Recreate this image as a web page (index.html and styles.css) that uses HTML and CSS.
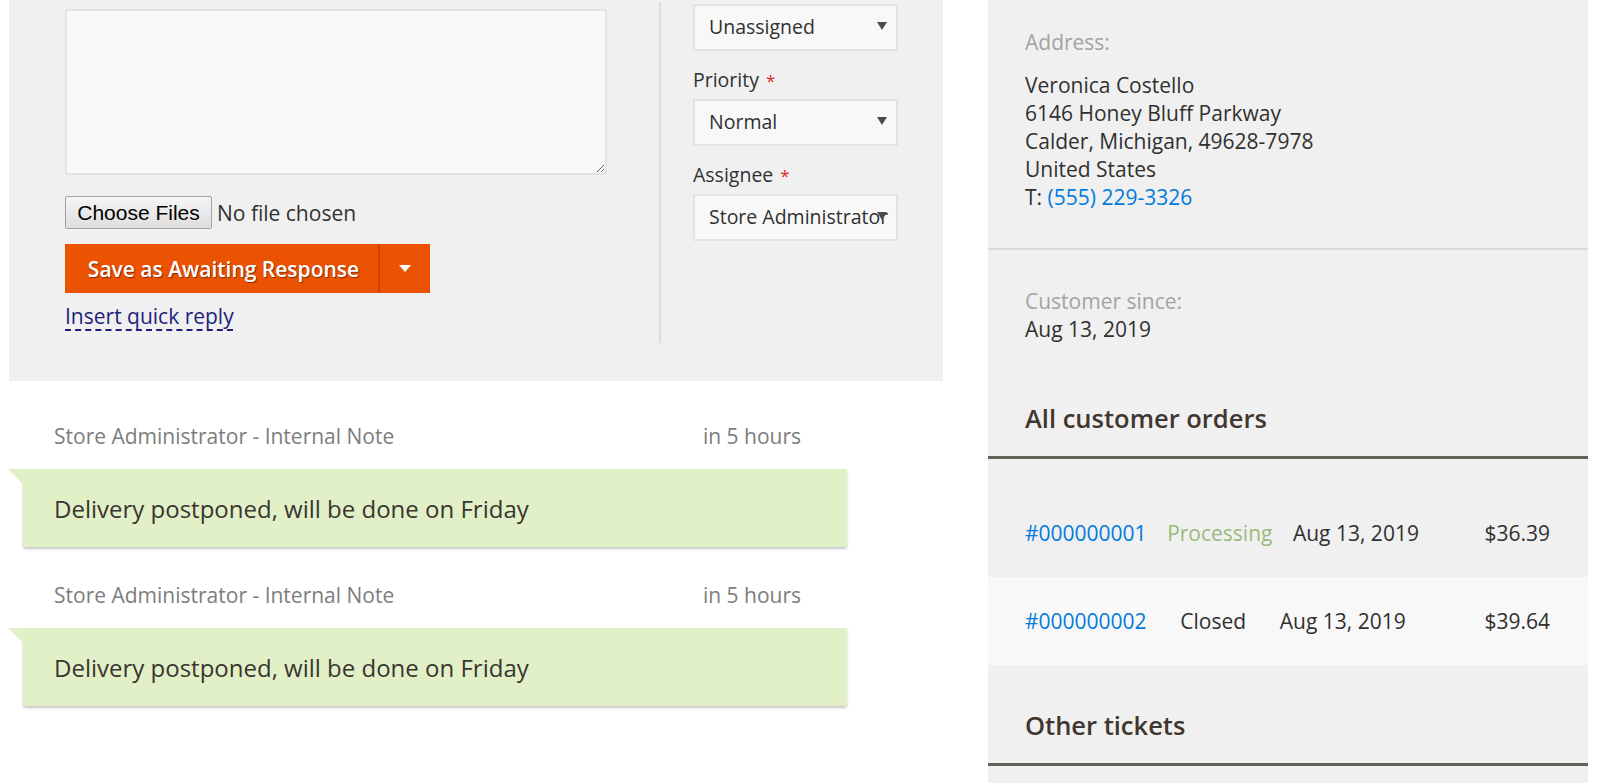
FILE: index.html
```html
<!DOCTYPE html>
<html lang="en">
<head>
<meta charset="utf-8">
<title>Ticket</title>
<link rel="stylesheet" href="styles.css">
</head>
<body>
<div class="page">
  <main class="main">
    <section class="form-panel">
      <div class="form-row">
        <div class="compose">
          <textarea class="reply-text"></textarea>
          <div class="file-row">
            <button class="file-btn" type="button">Choose Files</button>
            <span class="file-label">No file chosen</span>
          </div>
          <div class="split-btn">
            <button class="split-main" type="button">Save as Awaiting Response</button>
            <button class="split-toggle" type="button" aria-label="More">
              <svg width="12" height="8" viewBox="0 0 12 8"><path d="M0 0H12L6 7Z" fill="#fff"/></svg>
            </button>
          </div>
          <a class="quick-reply" href="#">Insert quick reply</a>
        </div>
        <div class="divider"></div>
        <div class="props">
          <div class="select"><span class="select-text">Unassigned</span><svg class="select-arrow" width="10" height="8" viewBox="0 0 10 8"><path d="M0 0H10L5 8Z" fill="#514943"/></svg></div>
          <label class="prop-label">Priority <span class="req">*</span></label>
          <div class="select"><span class="select-text">Normal</span><svg class="select-arrow" width="10" height="8" viewBox="0 0 10 8"><path d="M0 0H10L5 8Z" fill="#514943"/></svg></div>
          <label class="prop-label">Assignee <span class="req">*</span></label>
          <div class="select"><span class="select-text">Store Administrator</span><svg class="select-arrow" width="10" height="8" viewBox="0 0 10 8"><path d="M0 0H10L5 8Z" fill="#514943"/></svg></div>
        </div>
      </div>
    </section>

    <section class="notes">
      <article class="note">
        <div class="note-head"><span>Store Administrator - Internal Note</span><span>in 5 hours</span></div>
        <div class="note-body">Delivery postponed, will be done on Friday</div>
      </article>
      <article class="note">
        <div class="note-head"><span>Store Administrator - Internal Note</span><span>in 5 hours</span></div>
        <div class="note-body">Delivery postponed, will be done on Friday</div>
      </article>
    </section>
  </main>

  <aside class="aside">
    <div class="info-block address-block">
      <div class="info-label">Address:</div>
      <div class="address">
        Veronica Costello<br>
        6146 Honey Bluff Parkway<br>
        Calder, Michigan, 49628-7978<br>
        United States<br>
        T: <a class="link" href="#">(555) 229-3326</a>
      </div>
    </div>
    <div class="info-block since-block">
      <div class="info-label since-label">Customer since:</div>
      <div>Aug 13, 2019</div>
    </div>

    <h2 class="aside-title orders-title">All customer orders</h2>
    <div class="orders">
      <div class="order-row">
        <a class="link" href="#">#000000001</a>
        <span class="status-processing">Processing</span>
        <span>Aug 13, 2019</span>
        <span class="price">$36.39</span>
      </div>
      <div class="order-row alt">
        <a class="link" href="#">#000000002</a>
        <span>Closed</span>
        <span>Aug 13, 2019</span>
        <span class="price">$39.64</span>
      </div>
    </div>

    <h2 class="aside-title tickets-title">Other tickets</h2>
  </aside>
</div>
</body>
</html>
```

FILE: styles.css
```css
* { box-sizing: border-box; }

html, body {
  margin: 0;
  padding: 0;
  background: #fff;
  font-family: "Open Sans", "Noto Sans", sans-serif;
  color: #303030;
  overflow: hidden;
}

.page {
  display: flex;
  align-items: flex-start;
  height: 783px;
}

.main {
  width: 934px;
  margin-left: 9px;
  flex: none;
}

/* ---------- reply form ---------- */
.form-panel {
  background: #f0f0f0;
  padding: 2px 45px 38px 56px;
}

.form-row {
  display: flex;
  height: 341px;
}

.compose {
  width: 542px;
  display: flex;
  flex-direction: column;
  align-items: flex-start;
}

.reply-text {
  display: block;
  margin-top: 7px;
  width: 542px;
  height: 166px;
  border: 2px solid #e3e3e3;
  background: #f8f8f8;
  font-family: inherit;
  font-size: 19px;
  outline: none;
}

.file-row {
  margin-top: 21px;
  display: flex;
  align-items: center;
  height: 33px;
}

.file-btn {
  height: 33px;
  width: 147px;
  padding: 0;
  font-family: "Liberation Sans", Arial, sans-serif;
  font-size: 21px;
  color: #000;
  background: linear-gradient(#f6f6f6, #dedede);
  border: 1px solid #a3a3a3;
  border-radius: 2px;
}

.file-label {
  margin-left: 5px;
  font-size: 21px;
  color: #303030;
}

.split-btn {
  margin-top: 15px;
  display: flex;
  height: 49px;
  background: #eb5202;
}

.split-main {
  width: 315px;
  border: 0;
  border-right: 2px solid #c94500;
  background: transparent;
  color: #fff;
  font-family: inherit;
  font-size: 21px;
  font-weight: 600;
  text-shadow: 1px 1px 1px rgba(0, 0, 0, 0.45);
  padding: 0 0 0 4px;
}

.split-toggle {
  width: 50px;
  border: 0;
  background: transparent;
  display: flex;
  align-items: center;
  justify-content: center;
  padding: 0;
}

.quick-reply {
  margin-top: 9px;
  font-size: 21px;
  line-height: 28px;
  color: #1f1f7a;
  text-decoration: underline dashed;
  text-decoration-thickness: 2px;
  text-underline-offset: 5px;
}

.divider {
  margin-left: 52px;
  width: 2px;
  background: #dcdcdc;
}

.props {
  margin-left: 32px;
  width: 205px;
  padding-top: 2px;
}

.select {
  position: relative;
  height: 47px;
  border: 2px solid #e3e3e3;
  background: #f8f8f8;
  padding: 0 8px 2px 14px;
  display: flex;
  align-items: center;
  overflow: hidden;
  white-space: nowrap;
  font-size: 19.5px;
  color: #303030;
}

.select-arrow {
  position: absolute;
  right: 9px;
  top: 16px;
}

.prop-label {
  display: block;
  height: 28px;
  margin: 15px 0 5px;
  font-size: 19.5px;
  line-height: 28px;
  color: #303030;
}

.req {
  color: #e22626;
  font-size: 17px;
  line-height: 1;
  margin-left: 2px;
}

/* ---------- notes ---------- */
.notes {
  padding: 7px 0 0 14px;
}

.note {
  margin-top: 34px;
  width: 824px;
}

.note-head {
  display: flex;
  justify-content: space-between;
  padding: 0 46px 0 31px;
  font-size: 21px;
  line-height: 28px;
  color: #7d7d7d;
}

.note-body {
  position: relative;
  margin-top: 19px;
  height: 78px;
  padding: 0 31px;
  display: flex;
  align-items: center;
  background: #e2f0c8;
  border-radius: 0 0 3px 3px;
  box-shadow: 0 2px 3px rgba(0, 0, 0, 0.22);
  font-size: 24px;
  color: #3a3530;
}

.note-body::before {
  content: "";
  position: absolute;
  left: -15px;
  top: 0;
  width: 0;
  height: 0;
  border-top: 15px solid #e2f0c8;
  border-left: 15px solid transparent;
}

/* ---------- aside ---------- */
.aside {
  flex: none;
  margin-left: 45px;
  width: 600px;
  height: 783px;
  background: #f0f0f0;
  font-size: 21px;
  line-height: 28px;
  color: #303030;
}

.info-block {
  padding: 0 38px 0 37px;
}

.address-block {
  padding-top: 28px;
  padding-bottom: 37px;
  border-bottom: 2px solid #d9d9d9;
}

.info-label {
  color: #a3a3a3;
}

.address {
  margin-top: 15px;
}

.since-block {
  padding-top: 37px;
}

.link {
  color: #007bdb;
  text-decoration: none;
}

.aside-title {
  margin: 0;
  padding: 0 37px 22px;
  font-size: 25.5px;
  line-height: 32px;
  font-weight: 600;
  color: #41362f;
  border-bottom: 3px solid #66605a;
}

.orders-title {
  margin-top: 59px;
}

.orders {
  margin-top: 30px;
}

.order-row {
  display: flex;
  justify-content: space-between;
  align-items: center;
  height: 88px;
  padding: 0 38px 0 37px;
}

.order-row.alt {
  background: #f8f8f8;
}

.status-processing {
  color: #99ba79;
}

.price {
  margin-left: 45px;
}

.tickets-title {
  margin-top: 44px;
}
```
